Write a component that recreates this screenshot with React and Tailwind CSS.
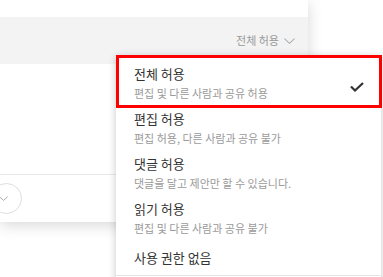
import React from "react";

const font = { fontFamily: '"Noto Sans CJK KR", "Noto Sans", sans-serif' };

const options = [
  { title: "전체 허용", desc: "편집 및 다른 사람과 공유 허용", checked: true },
  { title: "편집 허용", desc: "편집 허용, 다른 사람과 공유 불가" },
  { title: "댓글 허용", desc: "댓글을 달고 제안만 할 수 있습니다." },
  { title: "읽기 허용", desc: "편집 및 다른 사람과 공유 불가" },
];

function Chevron({ className }) {
  return (
    <svg className={className} viewBox="0 0 12 6" fill="none" stroke="currentColor" strokeWidth="1.1">
      <path d="M0.5 0.5 L6 5.5 L11.5 0.5" />
    </svg>
  );
}

function Check() {
  return (
    <svg className="w-[14px] h-[10px] text-[#333]" viewBox="0 0 14 10" fill="none" stroke="currentColor" strokeWidth="2.2">
      <path d="M1 4.5 L5 8.5 L13 1" />
    </svg>
  );
}

export default function App() {
  return (
    <div className="relative w-[383px] h-[277px] overflow-hidden bg-white" style={font}>
      {/* share card behind the menu */}
      <div className="w-[308px] h-[222px] bg-white shadow-[0_3px_14px_rgba(0,0,0,0.16)] flex flex-col">
        <div className="h-[17px]" />
        <div className="h-[47px] bg-[#f3f3f3] flex items-center justify-end pr-[13px] gap-[5px] text-[11px] text-[#9a9a9a]">
          <span>전체 허용</span>
          <Chevron className="w-[11px] h-[6px] text-[#aaa]" />
        </div>
        <div className="h-[110px]" />
        <div className="border-t border-[#e8e8e8] flex-1 flex items-center">
          <button className="-ml-[9px] w-[31px] h-[31px] rounded-full border border-[#dedede] flex items-center justify-center">
            <Chevron className="w-[9px] h-[5px] text-[#999] -ml-[6px]" />
          </button>
        </div>
      </div>

      {/* permission dropdown */}
      <div className="absolute left-[116px] top-[55px] w-[265px] bg-white shadow-[0_2px_8px_rgba(0,0,0,0.22)] pt-[7px]">
        {options.map((o) => (
          <div key={o.title} className="h-[45px] pt-[2px] pl-[18px] pr-[17px] flex items-start justify-between">
            <div className="flex flex-col">
              <span className="text-[13px] leading-[20px] text-[#333]">{o.title}</span>
              <span className="text-[11px] leading-[18px] text-[#9a9a9a]">{o.desc}</span>
            </div>
            {o.checked && (
              <div className="pt-[18px]">
                <Check />
              </div>
            )}
          </div>
        ))}
        <div className="h-[33px] pt-[2px] pl-[18px]">
          <span className="text-[13px] leading-[20px] text-[#333]">사용 권한 없음</span>
        </div>
        <div className="border-t border-[#e5e5e5] h-[20px]" />
      </div>

      {/* highlight box */}
      <div className="absolute left-[116px] top-[55px] w-[266px] h-[53px] border-[3px] border-[#ff0000]" />
    </div>
  );
}
